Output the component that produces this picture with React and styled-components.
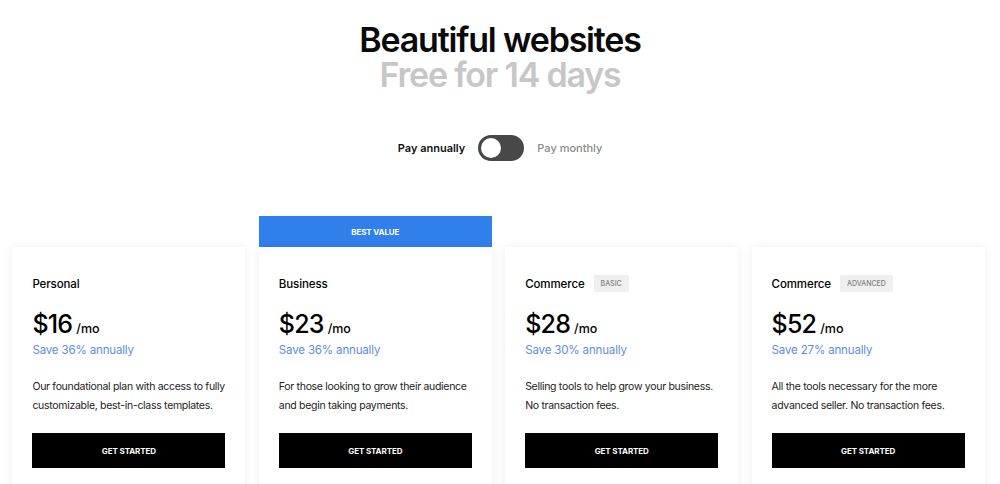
import React, { useState } from "react";
import styled, { createGlobalStyle } from "styled-components";

const Global = createGlobalStyle`
  html, body { margin: 0; padding: 0; background: #fff; overflow: hidden; }
  body { font-family: Inter, "Liberation Sans", Arial, sans-serif; color: #000; }
  * { box-sizing: border-box; }
`;

const Page = styled.div`
  width: 1000px;
  height: 484px;
  overflow: hidden;
  display: flex;
  flex-direction: column;
  align-items: center;
`;

const Hero = styled.header`
  padding-top: 22px;
  text-align: center;
`;

const Title = styled.h1`
  margin: 0;
  font-size: 34px;
  font-weight: 600;
  line-height: 35px;
  letter-spacing: -1.2px;
  color: ${(p) => (p.muted ? "#c7c7c7" : "#0a0a0a")};
`;

const ToggleRow = styled.div`
  margin-top: 43px;
  display: flex;
  align-items: center;
  gap: 13px;
`;

const ToggleLabel = styled.span`
  font-size: 11px;
  font-weight: ${(p) => (p.active ? 600 : 500)};
  color: ${(p) => (p.active ? "#111" : "#8a8a8a")};
`;

const Switch = styled.button`
  width: 46px;
  height: 26px;
  border-radius: 13px;
  border: none;
  padding: 3px;
  background: #484848;
  display: flex;
  justify-content: ${(p) => (p.on ? "flex-end" : "flex-start")};
  cursor: pointer;
`;

const Knob = styled.span`
  width: 20px;
  height: 20px;
  border-radius: 50%;
  background: #fff;
`;

const Plans = styled.div`
  margin-top: 55px;
  margin-right: 3px;
  display: grid;
  grid-template-columns: repeat(4, 233px);
  column-gap: 13.4px;
  align-items: end;
`;

const Column = styled.div`
  display: flex;
  flex-direction: column;
`;

const Banner = styled.div`
  height: 31px;
  background: #2f80ec;
  color: #fff;
  font-size: 8px;
  font-weight: 700;
  letter-spacing: -0.1px;
  display: flex;
  align-items: center;
  justify-content: center;
`;

const Card = styled.div`
  background: #fff;
  height: 260px;
  padding: 29px 20px 0;
  box-shadow: 0 0 10px rgba(0, 0, 0, 0.07);
`;

const PlanName = styled.div`
  display: flex;
  align-items: center;
  gap: 9px;
  font-size: 11.5px;
  font-weight: 500;
  letter-spacing: -0.1px;
  height: 15px;
`;

const Badge = styled.span`
  background: #efefef;
  color: #808080;
  font-size: 7px;
  font-weight: 500;
  letter-spacing: 0;
  padding: 4px 7px;
  border-radius: 1px;
`;

const Price = styled.div`
  margin-top: 20px;
  display: flex;
  align-items: baseline;
  gap: 4px;
  font-size: 25px;
  font-weight: 500;
  letter-spacing: -0.8px;
  line-height: 26px;
`;

const Per = styled.span`
  font-size: 12.5px;
  letter-spacing: 0;
`;

const Save = styled.div`
  font-size: 11.5px;
  color: #5b8de6;
  letter-spacing: -0.15px;
  line-height: 16px;
`;

const Desc = styled.p`
  margin: 19px 0 0;
  font-size: 10.5px;
  line-height: 19px;
  letter-spacing: -0.3px;
  color: #222;
  min-height: 38px;
`;

const Cta = styled.button`
  margin-top: 18px;
  width: 100%;
  height: 35px;
  border: none;
  background: #000;
  color: #fff;
  font-family: inherit;
  font-size: 8px;
  font-weight: 700;
  letter-spacing: -0.1px;
  cursor: pointer;
`;

const plans = [
  { name: "Personal", price: 16, save: 36, desc: "Our foundational plan with access to fully customizable, best-in-class templates." },
  { name: "Business", price: 23, save: 36, best: true, desc: "For those looking to grow their audience and begin taking payments." },
  { name: "Commerce", badge: "BASIC", price: 28, save: 30, desc: "Selling tools to help grow your business. No transaction fees." },
  { name: "Commerce", badge: "ADVANCED", price: 52, save: 27, desc: "All the tools necessary for the more advanced seller. No transaction fees." },
];

export default function App() {
  const [monthly, setMonthly] = useState(false);
  return (
    <Page>
      <Global />
      <Hero>
        <Title>Beautiful websites</Title>
        <Title muted>Free for 14 days</Title>
      </Hero>
      <ToggleRow>
        <ToggleLabel active={!monthly}>Pay annually</ToggleLabel>
        <Switch on={monthly} onClick={() => setMonthly((m) => !m)} aria-label="Toggle billing">
          <Knob />
        </Switch>
        <ToggleLabel active={monthly}>Pay monthly</ToggleLabel>
      </ToggleRow>
      <Plans>
        {plans.map((p, i) => (
          <Column key={i}>
            {p.best && <Banner>BEST VALUE</Banner>}
            <Card>
              <PlanName>
                {p.name}
                {p.badge && <Badge>{p.badge}</Badge>}
              </PlanName>
              <Price>
                ${p.price}
                <Per>/mo</Per>
              </Price>
              <Save>Save {p.save}% annually</Save>
              <Desc>{p.desc}</Desc>
              <Cta>GET STARTED</Cta>
            </Card>
          </Column>
        ))}
      </Plans>
    </Page>
  );
}
